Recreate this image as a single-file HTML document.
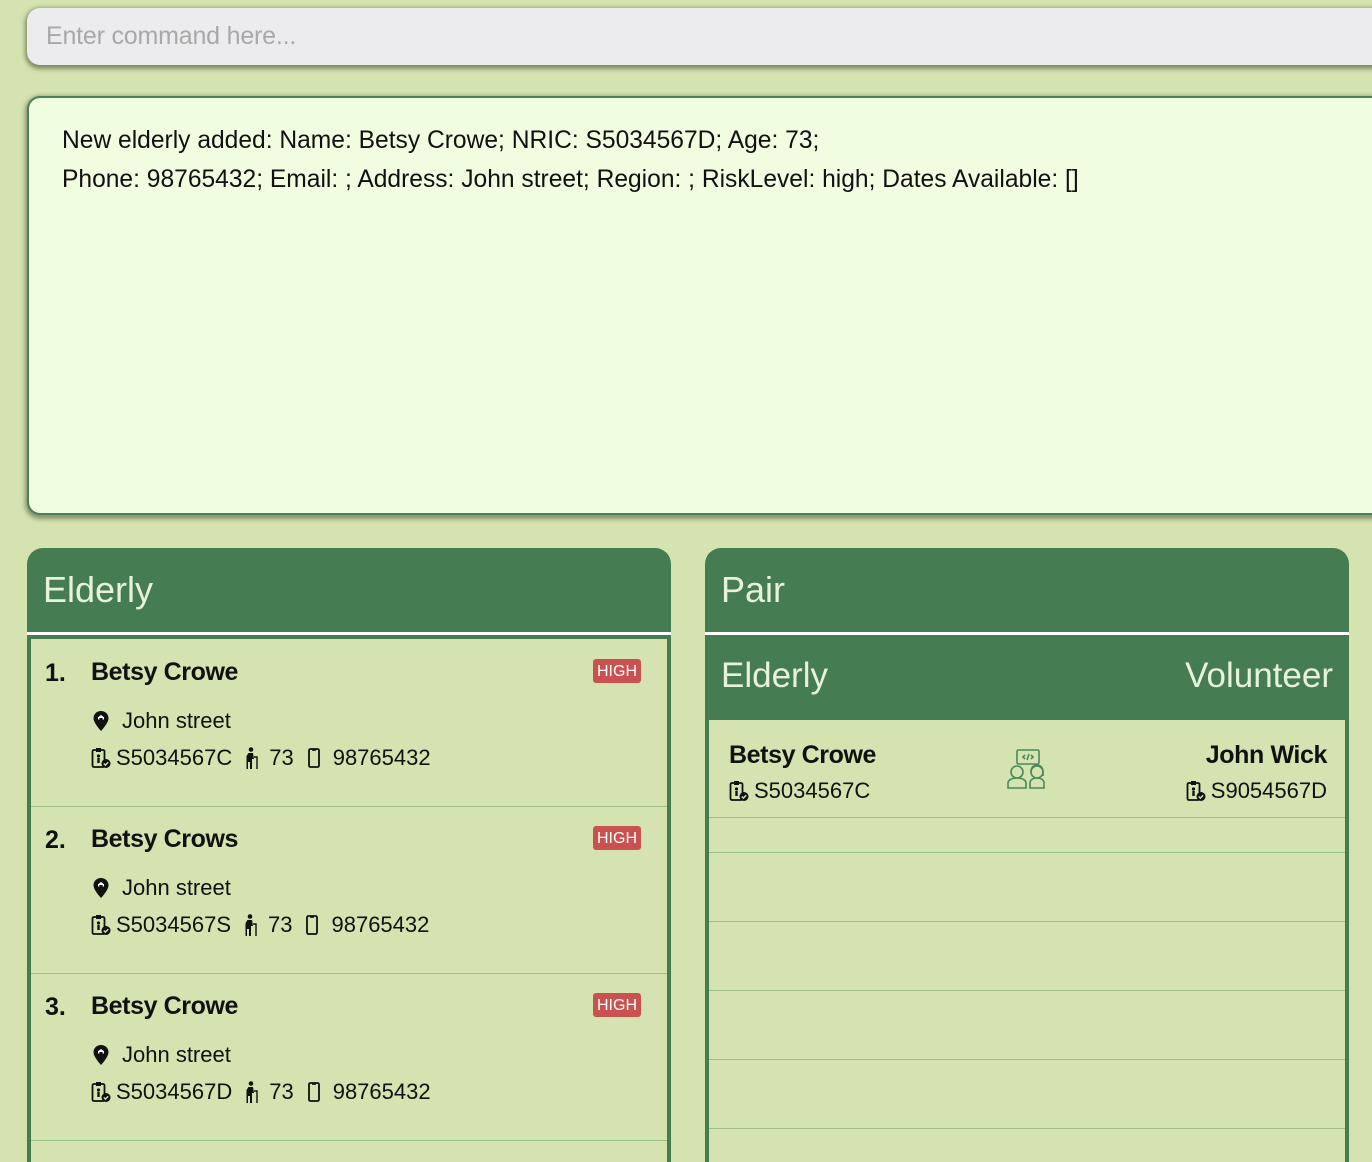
<!DOCTYPE html>
<html><head><meta charset="utf-8"><style>
*{box-sizing:border-box;margin:0;padding:0}
body{width:1372px;height:1162px;overflow:hidden;background:#d4e3b0;font-family:"Liberation Sans",sans-serif;position:relative;color:#111}
.abs{position:absolute}
.cmd{left:27px;top:8px;width:1370px;height:57px;background:#ececee;border-radius:13px;box-shadow:0 2px 4px 2px rgba(60,70,40,.55)}
.cmd span{position:absolute;left:19px;top:14px;font-size:25px;color:#a9a8a8;letter-spacing:-.2px}
.res{left:27px;top:96px;width:1370px;height:419px;background:#f0fde0;border:2px solid #4b8058;border-right:none;border-radius:13px 0 0 13px;box-shadow:0 2px 4px 2px rgba(60,70,40,.5)}
.res p{position:absolute;left:33px;font-size:24.6px;color:#111;white-space:nowrap}
.hdr{background:#467c52;color:#e6f2dc;font-size:36px;font-weight:300}
.panelL{left:27px;top:548px;width:644px;height:84px;border-radius:16px 16px 0 0}
.panelR{left:705px;top:548px;width:644px;height:84px;border-radius:16px 16px 0 0}
.white{height:3px;background:#fff}
.list{background:#d4e3b0;border:4px solid #467c52;border-bottom:none}
.sep{position:absolute;left:0;right:0;height:1px;background:#9fc08d}
.card{position:absolute;left:0;right:0;height:167px}
.num{position:absolute;left:14px;top:20px;font-size:25px;font-weight:bold}
.nm{position:absolute;left:60px;top:19px;font-size:25px;font-weight:bold;letter-spacing:-.4px}
.badge{position:absolute;left:562px;top:20px;width:48px;height:24px;background:#c9514f;border-radius:3px;color:#fff;font-size:16px;text-align:center;line-height:25px}
.ln{position:absolute;left:60px;font-size:22px;white-space:nowrap;display:flex;align-items:center}
.ln svg{flex:none}
</style></head><body>
<svg width="0" height="0" style="position:absolute">
<defs>
<symbol id="pin" viewBox="0 0 16 20"><path d="M8 0C3.6 0 .5 3.2.5 7.3c0 4.8 7.5 12.7 7.5 12.7s7.5-7.9 7.5-12.7C15.5 3.2 12.4 0 8 0z" fill="#111"/><path d="M5 8.5V6.3L8 4l3 2.3v2.2H9.6V7H6.4v1.5z" fill="#fff"/></symbol>
<symbol id="id" viewBox="0 0 20 22"><rect x="1.5" y="3" width="12" height="17" rx="1.5" fill="none" stroke="#111" stroke-width="1.8"/><rect x="5" y="1" width="5" height="4" fill="#111"/><circle cx="7.5" cy="9" r="1.6" fill="#111"/><path d="M6.3 11h2.4v5H6.3z" fill="#111"/><circle cx="15" cy="16.5" r="4.5" fill="#111"/><path d="M12.8 16.5l1.6 1.6 2.8-2.8" stroke="#d4e3b0" stroke-width="1.4" fill="none"/></symbol>
<symbol id="walk" viewBox="0 0 14 22"><circle cx="6" cy="2.5" r="2.3" fill="#111"/><path d="M3.5 6h4.5l1 6h-2v10H5v-7H3v7H1.5V9z" fill="#111"/><path d="M9 10h3v12" stroke="#111" stroke-width="1.4" fill="none"/></symbol>
<symbol id="ph" viewBox="0 0 12 20"><rect x="1" y="1" width="10" height="18" rx="1.5" fill="none" stroke="#111" stroke-width="1.8"/><rect x="4" y="1" width="4" height="1.8" fill="#111"/></symbol>
</defs></svg>

<div class="abs cmd"><span>Enter command here...</span></div>
<div class="abs res">
<p style="top:29px">New elderly added: Name: Betsy Crowe; NRIC: S5034567D; Age: 73;</p>
<p style="top:68px">Phone: 98765432; Email: ; Address: John street; Region: ; RiskLevel: high; Dates Available: []</p>
</div>

<div class="abs hdr panelL"><span style="position:absolute;left:16px;top:21px">Elderly</span></div>
<div class="abs white" style="left:27px;top:632px;width:644px"></div>
<div class="abs list" style="left:27px;top:635px;width:644px;height:527px">
 <div class="card" style="top:0">
  <div class="num">1.</div><div class="nm">Betsy Crowe</div><div class="badge">HIGH</div>
  <div class="ln" style="top:69px"><svg width="16" height="20" style="margin-left:2px;margin-right:13px"><use href="#pin"/></svg>John street</div>
  <div class="ln" style="top:106px"><svg width="20" height="22" style="margin-right:5px"><use href="#id"/></svg>S5034567C<svg width="14" height="22" style="margin:0 10px 0 13px"><use href="#walk"/></svg>73<svg width="12" height="20" style="margin:0 13px 0 14px"><use href="#ph"/></svg>98765432</div>
 </div>
 <div class="sep" style="top:167px"></div>
 <div class="card" style="top:167px">
  <div class="num">2.</div><div class="nm">Betsy Crows</div><div class="badge">HIGH</div>
  <div class="ln" style="top:69px"><svg width="16" height="20" style="margin-left:2px;margin-right:13px"><use href="#pin"/></svg>John street</div>
  <div class="ln" style="top:106px"><svg width="20" height="22" style="margin-right:5px"><use href="#id"/></svg>S5034567S<svg width="14" height="22" style="margin:0 10px 0 13px"><use href="#walk"/></svg>73<svg width="12" height="20" style="margin:0 13px 0 14px"><use href="#ph"/></svg>98765432</div>
 </div>
 <div class="sep" style="top:334px"></div>
 <div class="card" style="top:334px">
  <div class="num">3.</div><div class="nm">Betsy Crowe</div><div class="badge">HIGH</div>
  <div class="ln" style="top:69px"><svg width="16" height="20" style="margin-left:2px;margin-right:13px"><use href="#pin"/></svg>John street</div>
  <div class="ln" style="top:106px"><svg width="20" height="22" style="margin-right:5px"><use href="#id"/></svg>S5034567D<svg width="14" height="22" style="margin:0 10px 0 13px"><use href="#walk"/></svg>73<svg width="12" height="20" style="margin:0 13px 0 14px"><use href="#ph"/></svg>98765432</div>
 </div>
 <div class="sep" style="top:501px"></div>
</div>

<div class="abs hdr panelR"><span style="position:absolute;left:16px;top:21px">Pair</span></div>
<div class="abs white" style="left:705px;top:632px;width:644px"></div>
<div class="abs hdr" style="left:705px;top:635px;width:644px;height:85px"><span style="position:absolute;left:16px;top:21px;font-size:35px">Elderly</span><span style="position:absolute;right:16px;top:21px;font-size:35px">Volunteer</span></div>
<div class="abs list" style="left:705px;top:720px;width:644px;height:442px;border-top:none">
 <div class="abs nm" style="left:20px;top:21px">Betsy Crowe</div>
 <div class="ln" style="left:20px;top:58px"><svg width="20" height="22" style="margin-right:5px"><use href="#id"/></svg>S5034567C</div>
 <svg class="abs" style="left:298px;top:28px" width="42" height="42" viewBox="0 0 42 42" fill="none" stroke="#4a8a5a" stroke-width="1.6"><rect x="10" y="2" width="22" height="14" rx="1.5"/><path d="M18 7l-2 2 2 2M24 7l2 2-2 2M22 6l-2 6"/><circle cx="10" cy="24" r="6"/><path d="M1 40v-5c0-3 4-5 9-5s9 2 9 5v5z"/><circle cx="30" cy="24" r="6"/><path d="M23 40v-5c0-3 3-5 7-5s7 2 7 5v5z M24 24c0-4 2-7 6-7s6 3 6 7v4"/></svg>
 <div class="abs nm" style="left:auto;right:18px;top:21px">John Wick</div>
 <div class="ln" style="left:auto;right:18px;top:58px"><svg width="20" height="22" style="margin-right:5px"><use href="#id"/></svg>S9054567D</div>
 <div class="sep" style="top:97px"></div>
 <div class="sep" style="top:132px"></div>
 <div class="sep" style="top:201px"></div>
 <div class="sep" style="top:270px"></div>
 <div class="sep" style="top:339px"></div>
 <div class="sep" style="top:408px"></div>
</div>
</body></html>
